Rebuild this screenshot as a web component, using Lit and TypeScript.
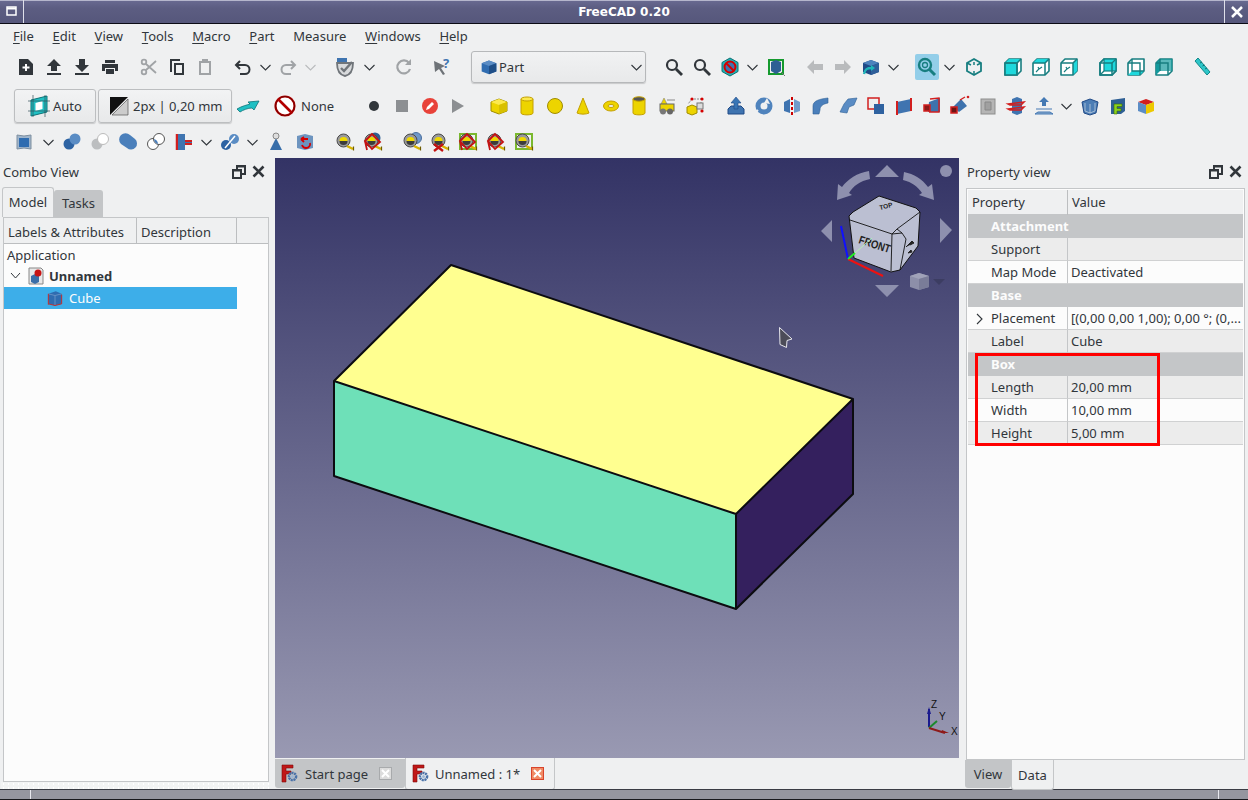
import { LitElement, html, css, svg } from "lit";
import { customElement } from "lit/decorators.js";

const D = "#31363b", G = "#a0a3a6", BL = "#3f74b0", BD = "#204a87", Y = "#edd400", YD = "#c4a000", T = "#1fb5b8", R = "#d40000";

const cube = (top: string, left: string, right: string, stroke = "none") => svg`
  <path d="M4 8l8-3 8 3v9l-8 3-8-3z" fill="${left}" stroke="${stroke}"/>
  <path d="M4 8l8-3 8 3-8 3z" fill="${top}"/><path d="M12 11l8-3v9l-8 3z" fill="${right}"/>`;
const wireBase = svg`<path d="M4 8l4-4h12v12l-4 4H4z" fill="#fff" stroke="#177e80" stroke-width="1.600" stroke-linejoin="round"/>`;
const wireEdges = svg`<path d="M4 8h12l4-4M16 8v12" fill="none" stroke="#177e80" stroke-width="1.500"/>`;
const meas = (mode: "" | "blue" | "double" | "x" | "diamond" = "", green = false) => svg`
  ${green ? svg`<path d="M4 4h16v15H4z" fill="none" stroke="#7ab82e" stroke-width="2"/>` : ""}
  ${mode === "blue" ? svg`<circle cx="14" cy="8" r="5.500" fill="#2e5f94"/>` : ""}
  ${mode === "double" ? svg`<circle cx="16" cy="8" r="5.500" fill="#6f97c8" stroke="#4a6f9e"/>` : ""}
  <circle cx="10.500" cy="10.500" r="6.500" fill="#9a9a9a" stroke="#4a4a4a"/>
  <path d="M6.500 11a4 4 0 0 1 8 0z" fill="#efd800"/><path d="M6.500 11a4 4 0 0 0 8 0z" fill="#3c3c3c"/>
  <path d="M14 16l6 3" stroke="#d8b400" stroke-width="2.400"/><path d="M20.500 16.500v4" stroke="#6e5c00" stroke-width="1.200"/>
  ${mode === "x" ? svg`<path d="M6 14l9 7M6 21l9-7" stroke="#c41212" stroke-width="2.300"/>` : ""}
  ${mode === "diamond" || mode === "blue" ? svg`<path d="M4 11l7-7 8 8-8 7zM4 11l2 9" fill="none" stroke="#c41212" stroke-width="1.800"/>` : ""}`;

const I: Record<string, unknown> = {
  new: svg`<path d="M5 4h9l5 5v11H5z" fill="${D}"/><path d="M12 9v7M8.500 12.500h7" stroke="#fff" stroke-width="2"/>`,
  up: svg`<path d="M12 4l7 7h-4v5H9v-5H5zM5 18h14v2H5z" fill="${D}"/>`,
  down: svg`<path d="M9 4h6v6h4l-7 7-7-7h4zM5 18h14v2H5z" fill="${D}"/>`,
  print: svg`<path d="M7 5h10v3H7zM4 9h16v7h-3v-3H7v3H4zM8 14h8v5H8z" fill="${D}"/>`,
  cut: svg`<g stroke="${G}" fill="none" stroke-width="1.800"><circle cx="7" cy="7" r="2.300"/><circle cx="7" cy="17" r="2.300"/><path d="M9 9l10 9M9 15L19 6"/></g>`,
  copy: svg`<path d="M5 4h10v2H7v11H5z" fill="${D}"/><path d="M9 8h10v12H9zm2 2v8h6v-8z" fill="${D}" fill-rule="evenodd"/>`,
  paste: svg`<path d="M6 6h3V4h6v2h3v14H6zm2 2v10h8V8z" fill="${G}" fill-rule="evenodd"/>`,
  undo: svg`<path d="M9 6L5 10l4 4M5 10h9a4.500 4.500 0 0 1 0 9h-5" fill="none" stroke="${D}" stroke-width="2"/>`,
  redo: svg`<path d="M15 6l4 4-4 4M19 10h-9a4.500 4.500 0 0 0 0 9h5" fill="none" stroke="${G}" stroke-width="2"/>`,
  sync: svg`<path d="M4 8c0 8 3 12 8 13 5-1 8-5 8-13z" fill="#d8dadc" stroke="#70757a" stroke-width="1.800"/><path d="M4 3h10v4H4z" fill="${BL}"/><path d="M8 13l3 3 8-9" fill="none" stroke="#70757a" stroke-width="2.400"/>`,
  refresh: svg`<path d="M18 14a6.500 6.500 0 1 1-1-6" fill="none" stroke="${G}" stroke-width="2.200"/><path d="M19 4v6h-6z" fill="${G}"/>`,
  what: svg`<path d="M4 6l11 5-4 2 4 6-2 1-4-6-4 3z" fill="#6e7378"/><text x="13" y="13" font-size="13" font-weight="700" fill="${BL}" font-family="Noto Sans">?</text>`,
  zoom: svg`<circle cx="10" cy="10" r="5" fill="none" stroke="${D}" stroke-width="2.200"/><path d="M14 14l6 6" stroke="${D}" stroke-width="2.800"/>`,
  nosel: svg`<path d="M12 3l8 4.500v9L12 21l-8-4.500v-9z" fill="#1fb5b8" stroke="#0d6f72"/><circle cx="12" cy="12" r="5.500" fill="${BL}" stroke="${R}" stroke-width="2"/><path d="M8 8l8 8" stroke="${R}" stroke-width="2"/>`,
  sel3d: svg`<rect x="5" y="5" width="14" height="14" fill="none" stroke="#159a2e" stroke-width="2"/><path d="M7 7l5-2 5 2v9l-5 3-5-3z" fill="#2e5f94"/><path d="M17 17l4 4" stroke="#777"/>`,
  back: svg`<path d="M4 12l7-7v4h9v6h-9v4z" fill="#b9bbbd"/>`,
  fwd: svg`<path d="M20 12l-7-7v4H4v6h9v4z" fill="#b9bbbd"/>`,
  cubearrow: svg`${cube("#4d82bd", BD, "#2f5f9a")}<path d="M5 19c1-5 3-6 8-6" fill="none" stroke="${T}" stroke-width="2.400"/><path d="M12 10l4 3-4 3z" fill="${T}"/>`,
  hl: svg`<circle cx="10" cy="10" r="6" fill="none" stroke="#177e80" stroke-width="2.400"/><circle cx="10" cy="10" r="2.500" fill="none" stroke="#177e80" stroke-width="1.300"/><path d="M14 14l6 6" stroke="#177e80" stroke-width="3"/>`,
  iso: svg`<path d="M12 4l7 4v8l-7 4-7-4V8z" fill="none" stroke="#177e80" stroke-width="1.800"/><path d="M5 8l4 2M19 8l-4 2M12 20v-4M12 7v3" stroke="#177e80" stroke-width="1.500"/>`,
  vfront: svg`${wireBase}<path d="M4 8l4-4h12l-4 4v12H4z" fill="#1ed8dc"/>${wireEdges}<path d="M4 8h12v12H4z" fill="none" stroke="#177e80" stroke-width="1.600"/>`,
  vtop: svg`${wireBase}<path d="M4 8l4-4h12l-4 4z" fill="#1ed8dc"/>${wireEdges}<path d="M7 17l3-3-1-2M13 12l-3 2" stroke="#177e80" stroke-width="1.200" fill="none"/>`,
  vright: svg`${wireBase}<path d="M16 8l4-4v12l-4 4z" fill="#1ed8dc"/>${wireEdges}<path d="M7 17l3-3-1-2M13 12l-3 2" stroke="#177e80" stroke-width="1.200" fill="none"/>`,
  vrear: svg`${wireBase}<rect x="8" y="4" width="12" height="12" fill="#1ed8dc" stroke="#177e80" stroke-width="1.200"/><path d="M4 8h12v12H4z" fill="none" stroke="#177e80" stroke-width="1.500"/><path d="M4 8l4-4M4 20l4-4M16 8l4-4M16 20l4-4" stroke="#177e80" stroke-width="1.300"/>`,
  vbottom: svg`${wireBase}<path d="M4 20l4-4h12l-4 4z" fill="#1ed8dc"/><path d="M8 4v12h12M4 8h12v12" fill="none" stroke="#177e80" stroke-width="1.400"/>`,
  vleft: svg`${wireBase}<path d="M4 8l4-4v12l-4 4z" fill="#149a9d"/><rect x="8" y="4" width="12" height="12" fill="#149a9d" opacity=".7"/><path d="M8 4v12M4 8h12v12" fill="none" stroke="#177e80" stroke-width="1.500"/>`,
  ruler: svg`<path d="M8 3l12 14-3 3L5 6z" fill="#2dc6c9" stroke="#12888a"/><path d="M10 8l2-1M12.500 11l2-1M15 14l2-1" stroke="#0f6e70"/>`,
  arrow: svg`<path d="M1 15c5-3 10-4 13-5l-2-2 11-1-5 9-2-2c-4 0-9 2-12 4z" fill="#1fc0c4" stroke="#0d7478" stroke-width=".8"/>`,
  circ: svg`<circle cx="12" cy="12" r="5" fill="${D}"/>`,
  sq: svg`<rect x="6" y="6" width="12" height="12" fill="#8c8f92"/>`,
  pen: svg`<circle cx="12" cy="12" r="8" fill="#e8423a"/><path d="M8 16l1-3 5-5 2 2-5 5z" fill="#fff"/>`,
  play: svg`<path d="M6 5l12 7-12 7z" fill="#8c8f92"/>`,
  ybox: cube("#fce94f", Y, "#d8c000", "#a08c00"),
  ycyl: svg`<path d="M6 5v14c0 2.500 12 2.500 12 0V5z" fill="${Y}" stroke="${YD}"/><ellipse cx="12" cy="5" rx="6" ry="2" fill="#fce94f" stroke="${YD}"/>`,
  ysph: svg`<circle cx="12" cy="12" r="7.500" fill="${Y}" stroke="#a08c00"/>`,
  ycone: svg`<path d="M12 4l6 15c-3 1.500-9 1.500-12 0z" fill="${Y}" stroke="${YD}"/>`,
  ytor: svg`<ellipse cx="12" cy="12" rx="7.500" ry="5" fill="${Y}" stroke="${YD}"/><ellipse cx="12" cy="12" rx="3" ry="1.500" fill="#eff0f1" stroke="${YD}"/>`,
  ytube: svg`<path d="M6 5v14c0 2.500 12 2.500 12 0V5z" fill="${Y}" stroke="${YD}"/><ellipse cx="12" cy="5" rx="6" ry="2.200" fill="#555" stroke="${YD}"/>`,
  prims: svg`<path d="M9 4l3 6H6z" fill="${Y}" stroke="#777" stroke-width=".5"/><path d="M12 6h8" stroke="#888"/><rect x="5" y="10" width="14" height="7" fill="${Y}" stroke="#666"/><circle cx="8" cy="17.500" r="3" fill="#777"/><circle cx="15" cy="17.500" r="3" fill="#666"/>`,
  shape: svg`<path d="M4 13l5-2 5 2v6l-5 2-5-2z" fill="${Y}" stroke="#a08c00"/><path d="M11 5h7M18 8v6M9 5L5 10" stroke="#888" stroke-dasharray="2 1"/><rect x="14" y="9" width="6" height="6" fill="#ddd" stroke="#777"/><circle cx="9" cy="5" r="1.600" fill="${R}"/><circle cx="19" cy="5" r="1.600" fill="${R}"/><circle cx="19" cy="17" r="1.600" fill="${R}"/>`,
  extrude: svg`<path d="M4 15l3-3h10l3 3v5H4z" fill="${BL}" stroke="${BD}"/><path d="M12 3l5 6h-3v6h-4V9H7z" fill="#3975b5" stroke="${BD}" stroke-width=".6"/>`,
  revolve: svg`<circle cx="12" cy="12" r="6" fill="none" stroke="#4f83bd" stroke-width="5"/><path d="M15 4l3 6-6-1z" fill="#eff0f1"/><path d="M6 16l-2 2" stroke="#eff0f1" stroke-width="2"/>`,
  mirror: svg`<path d="M4 8l6-3v14l-6-2z" fill="${BL}"/><path d="M20 8l-6-3v14l6-2z" fill="#6f9bca"/><path d="M12 3v18" stroke="#c00" stroke-width="2" stroke-dasharray="3 2"/>`,
  fillet: svg`<path d="M5 20V12C5 7 11 5 20 4v5c-5 1-8 3-8 7l-1 4z" fill="#4a7fbb" stroke="#2d5f96" stroke-width=".6"/>`,
  chamfer: svg`<path d="M4 18l4-8 4-5 9-1-3 7-5 2-2 6z" fill="#5a8cc4" stroke="#2d5f96" stroke-width=".6"/>`,
  offsetS: svg`<rect x="4" y="4" width="11" height="11" fill="none" stroke="#d21f1f" stroke-width="1.500"/><rect x="10" y="10" width="10" height="10" fill="#2f62a0"/>`,
  ruled: svg`<path d="M5 8l14-3v12L5 20z" fill="${BL}"/><path d="M5 7v14M19 4v13" stroke="#d21f1f" stroke-width="2"/>`,
  loft: svg`<path d="M9 8l11-4v14H8z" fill="#3d72ad"/><path d="M10 5l9-1v14H9" fill="none" stroke="#d21f1f" stroke-width="1.400"/><rect x="4" y="11" width="6" height="6" fill="#8b1a1a" stroke="#d21f1f" stroke-width="1.500"/>`,
  sweep: svg`<path d="M5 13l8-8 6 7-8 6z" fill="#3d72ad"/><rect x="3" y="13" width="6" height="6" fill="#6b1515" stroke="#d21f1f" stroke-width="1.500"/><path d="M12 6l5-3" stroke="#d21f1f" stroke-width="1.400"/><circle cx="20" cy="3" r="1.300" fill="#d21f1f"/>`,
  section: svg`<rect x="5" y="5" width="14" height="15" fill="#b5b5b5" stroke="#8d8d8d"/><path d="M9 8h6v8H9z" fill="#a0a0a0" stroke="#888"/>`,
  slices: svg`<path d="M8 5l5-2 5 2v14l-5 2-5-2z" fill="${BL}"/><path d="M4 10l16-2-3 3H6zM4 15l16-2-3 3H6z" fill="none" stroke="#d21f1f" stroke-width="1.500"/>`,
  offset3: svg`<path d="M12 3l5 5h-3v4h-4V8H7z" fill="#4479b4"/><path d="M4 15h16M3 20l3-2h12l3 2z" fill="#88aacd" stroke="#4479b4"/>`,
  thick: svg`<path d="M4 8l8-3 8 3-2 11-6 2-6-2z" fill="#4c7db5" stroke="#204a87"/><path d="M7 9v8l5 2 5-2V9M12 10v9" fill="none" stroke="#bcd" stroke-width=".8"/>`,
  partF: svg`<path d="M5 6l14-2v13l-4 3H5z" fill="#2e5f94"/><path d="M8 10h8v2.500h-5v2h4v2.500h-4v3H8z" fill="#8bd11e" stroke="#3d6d00" stroke-width=".6"/>`,
  colorcube: svg`<path d="M4 8l8-3 8 3-8 3z" fill="#d21f1f"/><path d="M4 8l8 3v9l-8-3z" fill="#5b8dc6"/><path d="M12 11l8-3v9l-8 3z" fill="#edc900"/>`,
  bcube: cube("#5a8cc4", "#2f6cb0", "#1e4e87"),
  boxfade: svg`<path d="M5 5l7 1 7-1v14l-7-1-7 1z" fill="#9fb5cc" stroke="#7f8f9f"/><path d="M7 8h10v9H7z" fill="#2f6cb0"/>`,
  bunion: svg`<circle cx="9" cy="14" r="5.500" fill="#2d63a3"/><circle cx="15" cy="9" r="5.500" fill="#5a8cc4"/>`,
  gunion: svg`<circle cx="9" cy="14" r="5.500" fill="#bcbec0"/><circle cx="15" cy="9" r="5.500" fill="#fff" stroke="#bbb"/>`,
  bfuse: svg`<path d="M5 14a6 6 0 0 1 9-9l5 4a6 6 0 0 1-8 9z" fill="#4a7fbb"/>`,
  bint: svg`<circle cx="9" cy="14" r="5.500" fill="#fff" stroke="#555"/><circle cx="15" cy="9" r="5.500" fill="#fff" stroke="#555"/><path d="M10 9a5.500 5.500 0 0 1 4 5 5.500 5.500 0 0 1-4-5z" fill="#4a7fbb"/>`,
  join: svg`<path d="M5 4v16" stroke="#d21f1f" stroke-width="2.500"/><path d="M6 4h7v7h7v2h-7v7H6z" fill="${BL}"/><path d="M13 11h7M13 14h7" stroke="#d21f1f" stroke-width="2"/>`,
  split: svg`<circle cx="8" cy="15" r="5" fill="#2d63a3"/><circle cx="16" cy="9" r="5" fill="#5a8cc4"/><path d="M7 18L17 6" stroke="#fff" stroke-width="1.500"/>`,
  tip: svg`<path d="M12 8l6 12H6z" fill="#376eaa"/><circle cx="12" cy="6" r="3" fill="#ddd" stroke="#888"/>`,
  restore: svg`<path d="M4 6l8-2 8 2v12l-8 2-8-2z" fill="#6d94bf"/><path d="M17 13a4 4 0 0 1-4 5c-3 0-4-3-4-3M8 9h7M8 9l3-2M8 9l3 3" fill="none" stroke="#d40000" stroke-width="1.800"/>`,
  m1: meas(), m2: meas("blue"), m3: meas("double"), m4: meas("x"),
  m5: meas("diamond", true), m6: meas("diamond"), m7: meas("", true),
};

const row1: (string | number)[] = ["new","up","down","print",11,"cut","copy","paste",10,"undo","v","redo","vg",12,"sync",2,"v",12,"refresh",10,"what",15,"COMBO",14,"zoom","zoom","nosel","v",1,"sel3d",11,"back","fwd","cubearrow","v",11,"hl",0,"v",2,"iso",11,"vfront","vtop","vright",11,"vrear","vbottom","vleft",10,"ruler"];
const row2a: (string | number)[] = [26,"circ","sq","pen","play",13,"ybox","ycyl","ysph","ycone","ytor","ytube","prims","shape",13,"extrude","revolve","mirror","fillet","chamfer","offsetS","ruled","loft","sweep","section","slices","offset3","v",1,"thick","partF","colorcube"];
const row3: (string | number)[] = ["boxfade",2,"v",1,"bunion","gunion","bfuse","bint","join","v",1,"split","v",1,"tip",1,"restore",12,"m1","m2",11,"m3","m4","m5","m6","m7"];

const chev = (c: string) => html`<svg class="chev" width="17" height="24" viewBox="0 0 17 24"><path d="M3.500 10l5 5 5-5" fill="none" stroke="${c}" stroke-width="1.100"/></svg>`;

const FLogo = html`<svg width="18" height="19" viewBox="0 0 18 19"><path d="M1 1h11v3H5v3h5v3H5v8H1z" fill="#c01818" stroke="#7d0c0c" stroke-width=".6"/><circle cx="11.500" cy="12.500" r="3.600" fill="none" stroke="#4a72a8" stroke-width="2.500" stroke-dasharray="2 .6"/><circle cx="11.500" cy="12.500" r="1.500" fill="#9db6d4"/></svg>`;
const winBtns = html`<svg class="wb" width="34" height="18" viewBox="0 0 34 18"><path d="M1 6h10v10H1zM3 8.500h6V14H3z" fill="#31363b" fill-rule="evenodd"/><path d="M5 6V2h10v10h-4v-2h2V4.500H7V6z" fill="#31363b"/><path d="M22.500 3.500l10 10M32.500 3.500l-10 10" stroke="#31363b" stroke-width="2.600"/></svg>`;

@customElement("app-root")
export class AppRoot extends LitElement {
  static styles = css`
    :host { display: block; width: 1248px; height: 800px; overflow: hidden; background: #eff0f1; color: #31363b; font-family: "Noto Sans", sans-serif; font-size: 13px; }
    .win { display: flex; flex-direction: column; height: 800px; }
    .title { height: 23px; flex: none; display: flex; align-items: center; border-bottom: 1px solid #0b0b14; background: linear-gradient(#6a6b92, #5c5d82 35%, #56577b); box-shadow: inset 0 1px 0 #b5b6cc; color: #fff; font: 700 12px "DejaVu Sans", sans-serif; }
    .wbtn { width: 23px; height: 23px; flex: none; display: flex; align-items: center; justify-content: center; border-right: 1px solid #dfe0ea; }
    .wbtn.r { border-right: 0; border-left: 1px solid #dfe0ea; }
    .tt { flex: 1; text-align: center; }
    .menu { height: 24px; flex: none; display: flex; align-items: center; padding-left: 13px; }
    .menu span { margin-right: 18.75px; }
    .menu u { text-underline-offset: 2px; }
    .tb { display: flex; align-items: center; flex: none; }
    .t1 { height: 38px; padding-left: 12px; }
    .t2 { height: 39px; padding-left: 14px; }
    .t3 { height: 33px; padding-left: 10px; }
    .slot { width: 28px; height: 24px; display: flex; align-items: center; justify-content: center; flex: none; }
    .slot.hl svg { background: #93cee9; border-radius: 2px; width: 24px; height: 26px; }
    .slot svg { display: block; overflow: visible; }
    .chev { flex: none; }
    .combo { width: 175px; height: 32px; flex: none; box-sizing: border-box; border: 1px solid #b6b8ba; border-radius: 3px; background: linear-gradient(#f1f2f3, #e8e9ea); box-shadow: 0 1px 1px #c8c9ca; display: flex; align-items: center; padding-left: 6px; }
    .combo .lb { flex: 1; margin-left: -1px; }
    .btn { height: 34px; box-sizing: border-box; border: 1px solid #bcbec0; border-radius: 3px; background: linear-gradient(#f2f3f4, #e8e9ea); box-shadow: 0 1px 1px #c8c9ca; display: flex; align-items: center; flex: none; }
    .b1 { width: 82px; padding-left: 12px; gap: 2px; margin-right: 2px; }
    .b2 { width: 134px; padding-left: 10px; gap: 4px; margin-right: 2px; }
    .none { margin-left: 2px; }
    .main { flex: 1; display: flex; min-height: 0; }
    .left { width: 269px; flex: none; display: flex; flex-direction: column; }
    .phead { height: 27px; padding: 0 0 2px 3px; flex: none; display: flex; align-items: center; justify-content: space-between; }
    .wb { margin-right: 4px; }
    .tabs { display: flex; height: 30px; flex: none; align-items: flex-end; padding-left: 2px; }
    .tabs > div { padding-bottom: 2px; box-sizing: border-box; }
    .tabs .on { width: 52px; height: 30px; background: #eff0f1; border: 1px solid #c4c6c8; border-bottom: 0; border-radius: 3px 3px 0 0; display: flex; align-items: center; justify-content: center; }
    .tabs .off { width: 49px; height: 27px; background: #c3c5c7; border-radius: 3px 3px 0 0; display: flex; align-items: center; justify-content: center; }
    .tree { flex: 1; margin-left: 3px; border: 1px solid #c4c6c8; background: #fcfcfc; min-height: 0; }
    .grip { height: 7px; flex: none; margin-left: 1px; background-color: #f3f4f4; background-image: radial-gradient(#fff 1px, transparent 1px); background-size: 5px 4px; }
    .thead { display: flex; background: #eff0f1; border-bottom: 1px solid #bcbec0; height: 26px; box-sizing: border-box; }
    .thead div { display: flex; align-items: center; padding: 2px 0 0 4px; border-right: 1px solid #bcbec0; box-sizing: border-box; }
    .th1 { width: 133px; } .th2 { width: 100px; }
    .tr { height: 21px; display: flex; align-items: center; }
    .app { padding-left: 3px; }
    .doc { padding-left: 6px; font-weight: 700; gap: 1px; }
    .doc .nm { margin-left: 4px; }
    .cube { height: 22px; width: 233px; background: #3daee9; color: #fcfcfc; padding-left: 41px; box-sizing: border-box; gap: 1px; margin-top: 1px; }
    .center { width: 684px; flex: none; margin-left: 6px; display: flex; flex-direction: column; }
    .view { height: 600px; flex: none; background: linear-gradient(#333365, #9999b2); }
    .view svg { display: block; }
    .dtabs { flex: 1; display: flex; align-items: flex-start; }
    .dt { display: flex; align-items: center; box-sizing: border-box; }
    .dt1 { width: 130px; height: 29px; margin-top: 1px; background: #c3c5c7; border-radius: 0 0 3px 3px; padding-left: 6px; }
    .dt2 { width: 150px; height: 32px; background: #eff0f1; border: 1px solid #c4c6c8; border-top: 0; border-radius: 0 0 3px 3px; padding-left: 6px; }
    .dt1 .lb { margin-left: 6px; flex: 1; }
    .dt2 .lb { margin-left: 5px; flex: 1; }
    .x { width: 13px; height: 13px; display: flex; align-items: center; justify-content: center; flex: none; box-sizing: border-box; }
    .x1 { background: #dcdcdc; border: 1px solid #a8aaac; margin-right: 13px; }
    .x2 { background: #f08a64; border: 1px solid #d9432b; margin-right: 10px; }
    .right { width: 283px; flex: none; display: flex; flex-direction: column; margin-left: 6px; position: relative; }
    .right .phead { padding: 0 0 2px 2px; height: 30px; box-sizing: border-box; }
    .right .wb { margin-right: 6px; }
    .props { height: 572px; flex: none; margin: 0 3px 0 1px; border: 1px solid #c4c6c8; background: #fcfcfc; padding: 1px; box-sizing: border-box; }
    .prow { display: grid; grid-template-columns: 100px 1fr; height: 23px; box-sizing: border-box; align-items: center; }
    .prow > div { height: 23px; display: flex; align-items: center; box-sizing: border-box; }
    .phdr { height: 25px; background: #eff0f1; border-bottom: 1px solid #c4c6c8; }
    .phdr > div { height: 25px; padding: 0 0 2px 4px; }
    .phdr > div:first-child { border-right: 1px solid #bcbec0; }
    .grp { background: #c4c6c8; color: #fcfcfc; font-weight: 700; padding: 0 0 2px 23px; box-sizing: border-box; height: 23px; display: flex; align-items: center; }
    .k { padding-left: 23px; position: relative; border-right: 1px solid #c4c6c8; }
    .k, .v { border-bottom: 1px solid #d0d1d2; }
    .v { padding-left: 3px; white-space: nowrap; overflow: hidden; }
    .odd .k, .odd .v { background: #ececec; }
    .odd { background: #eff0f1; }
    .exp { position: absolute; left: 8px; top: 6px; }
    .mark { position: absolute; left: 10px; top: 195px; width: 185px; height: 93px; box-sizing: border-box; border: 3px solid #f00; pointer-events: none; }
    .ptabs { display: flex; }
    .ptabs .a { width: 46px; height: 28px; background: #c3c5c7; border-radius: 0 0 3px 3px; display: flex; align-items: center; justify-content: center; box-sizing: border-box; padding-bottom: 1px; }
    .ptabs .b { width: 43px; height: 30px; background: #eff0f1; border: 1px solid #c4c6c8; border-top: 0; border-radius: 0 0 3px 3px; display: flex; align-items: center; justify-content: center; box-sizing: border-box; padding-top: 1px; }
    .status { height: 9px; flex: none; background: #95969f; border-top: 1px solid #3a3c44; border-bottom: 1px solid #17181c; display: flex; justify-content: space-between; }
    .status i { display: block; width: 1px; background: #e8e8ee; }
    .status .l { margin-left: 30px; }
    .status .r { margin-right: 29px; }
  `;

  private tb(items: (string | number)[]) {
    return items.map((it) => {
      if (typeof it === "number") return html`<span style="width:${it}px;flex:none"></span>`;
      if (it === "v") return chev("#31363b");
      if (it === "vg") return chev("#b9bbbd");
      if (it === "COMBO") return html`<div class="combo"><svg width="22" height="22" viewBox="0 0 24 24">${I.bcube}</svg><span class="lb">Part</span>${chev("#31363b")}</div>`;
      return html`<span class="slot ${it === "hl" ? "hl" : ""}"><svg width="24" height="24" viewBox="0 0 24 24">${I[it]}</svg></span>`;
    });
  }

  private prow(k: string, v: string, odd: boolean, exp = false) {
    return html`<div class="prow ${odd ? "odd" : ""}"><div class="k">${exp ? html`<svg class="exp" width="8" height="12" viewBox="0 0 8 12"><path d="M1 1l5 5-5 5" fill="none" stroke="#31363b" stroke-width="1.100"/></svg>` : ""}${k}</div><div class="v">${v}</div></div>`;
  }

  render() {
    return html`<div class="win">
      <div class="title">
        <div class="wbtn"><svg width="12" height="12" viewBox="0 0 12 12"><path d="M1 1h9v8H1z" fill="none" stroke="#fff" stroke-width="1.500"/><path d="M1 2.500h9" stroke="#fff" stroke-width="2"/></svg></div>
        <div class="tt">FreeCAD 0.20</div>
        <div class="wbtn r"><svg width="14" height="14" viewBox="0 0 14 14"><path d="M2 2l10 10M12 2L2 12" stroke="#fff" stroke-width="2.500"/></svg></div>
      </div>
      <div class="menu">
        <span><u>F</u>ile</span><span><u>E</u>dit</span><span><u>V</u>iew</span><span><u>T</u>ools</span><span><u>M</u>acro</span><span><u>P</u>art</span><span>Measure</span><span><u>W</u>indows</span><span><u>H</u>elp</span>
      </div>
      <div class="tb t1">${this.tb(row1)}</div>
      <div class="tb t2">
        <div class="btn b1"><svg width="24" height="24" viewBox="0 0 24 24"><path d="M4 6l16-4v16L4 22z" fill="#1fc0c4" stroke="#0d7478"/><path d="M8.500 9l7-2v8l-7 2z" fill="#fff"/><path d="M1 7h22M1 17h22M6 1v22M18 1v22" stroke="#31505a" stroke-width=".7"/></svg>Auto</div>
        <div class="btn b2"><svg width="20" height="20" viewBox="0 0 20 20"><path d="M1 1h18L1 19z" fill="#111"/><path d="M19 3v16H3z" fill="#ccc" stroke="#555" stroke-width=".7"/></svg>2px | 0,20 mm</div>
        <span class="slot"><svg width="24" height="24" viewBox="0 0 24 24">${I.arrow}</svg></span>
        <span style="width:9px;flex:none"></span>
        <span class="slot"><svg width="24" height="24" viewBox="0 0 24 24"><circle cx="12" cy="12" r="9.500" fill="#fff" stroke="#b30000" stroke-width="2.200"/><circle cx="12" cy="12" r="9.500" fill="none" stroke="#300" stroke-width=".5"/><path d="M5 5l14 14" stroke="#b30000" stroke-width="2.600"/></svg></span>
        <span class="none">None</span>
        ${this.tb(row2a)}
      </div>
      <div class="tb t3">${this.tb(row3)}</div>
      <div class="main">
        <div class="left">
          <div class="phead"><span>Combo View</span>${winBtns}</div>
          <div class="tabs"><div class="on">Model</div><div class="off">Tasks</div></div>
          <div class="tree">
            <div class="thead"><div class="th1">Labels &amp; Attributes</div><div class="th2">Description</div></div>
            <div class="tr app">Application</div>
            <div class="tr doc"><svg width="11" height="12" viewBox="0 0 11 12"><path d="M1 3l4.500 5L10 3" fill="none" stroke="#31363b" stroke-width="1"/></svg>
              <svg style="margin-left:6px" width="16" height="18" viewBox="0 0 16 18"><path d="M1 1h12l2 2v14H1z" fill="#e8e8e8" stroke="#888"/><path d="M3 9l4-2 4 2v6l-4 2-4-2z" fill="#3a6ea8"/><circle cx="10" cy="6" r="3.500" fill="#c81414"/></svg>
              <span class="nm">Unnamed</span></div>
            <div class="tr cube"><svg width="20" height="20" viewBox="0 0 24 24"><path d="M4 7l9-3 7 3v12l-8 2-8-2z" fill="#2f6cb0"/><path d="M4 7l8 2 8-2M12 9v12" stroke="#6f97c8" fill="none"/><path d="M4 7v13M12 21l-8-2M20 8v11M12 21l8-2" stroke="#c03030" stroke-width="1.200" fill="none"/></svg><span style="margin-left:3px">Cube</span></div>
          </div>
          <div class="grip"></div>
        </div>
        <div class="center">
          <div class="view"><svg width="684" height="600" viewBox="275 158 684 600">
            <path d="M451 265L853 399 736 514 334 381z" fill="#ffff90"/>
            <path d="M334 381L736 514V609L334 476z" fill="#6ee0b8"/>
            <path d="M853 399V494L736 609V514z" fill="#34205e"/>
            <path d="M451 265L853 399V494L736 609 334 476V381zM334 381L736 514 853 399M736 514V609" fill="none" stroke="#0c0c10" stroke-width="2" stroke-linejoin="round"/>
            <path d="M779.500 327.500L792 339l-5 1.500-.5 7-6.500-3z" fill="#4c4c58" stroke="#e8e8ee" stroke-width="1"/>
            <g fill="#8e90ae">
              <path d="M887 165l12 12h-24zM875 285h24l-12 12zM832 220v22l-11-11zM940 218v25l12-13z"/>
              <circle cx="946" cy="171" r="6"/>
              <path d="M869 171l1 8c-10 2-17 7-21 14l3 2-15 5 1-16 4 3c6-8 15-14 27-16zM904 172l-1 8c9 2 15 7 19 13l-3 2 15 5-2-16-4 3c-6-8-14-13-24-15z"/>
            </g>
            <path d="M849 216l4-4 26-16 37 12 4 4-2 34-18 24-9 2-37-14z" fill="#bbbfd2" stroke="#111" stroke-width="1"/>
            <path d="M850 220l42 14 5-5 23-17M892 234l-1 37M892 234l10-1 4 6-6 31M897 229l5 4" fill="none" stroke="#111" stroke-width=".9"/>
            <text font-family="Liberation Sans" font-size="9.500" font-weight="700" fill="#222" transform="translate(858 243) rotate(18) scale(1 1.200)">FRONT</text>
            <text font-family="Liberation Sans" font-size="6.500" font-weight="700" fill="#222" transform="translate(880 210) rotate(-14)">TOP</text>
            <path d="M906 247l6-6 2 2-4 2M908 253l3-3 1 2z" stroke="#222" fill="#222" stroke-width="1"/>
            <path d="M841 226l7 33" stroke="#1010ff" stroke-width="2"/><path d="M848 259l35 17" stroke="#ee1111" stroke-width="2"/>
            <path d="M848 259l7-6" stroke="#22ee22" stroke-width="2"/><path d="M855 253l17-15" stroke="#b7efb7" stroke-width="1"/>
            <path d="M910 276l9-3 10 3v11l-10 3-9-3z" fill="#8d8fa9"/><path d="M910 276l9 3 10-3-10-3z" fill="#a0a2b8"/><path d="M919 279l10-3v11l-10 3z" fill="#7a7c98"/><path d="M933 279h12l-6 6z" fill="#3c3d62"/>
            <path d="M929 727v-18" stroke="#1a1a8e" stroke-width="2"/><path d="M927 714h4l-2-7z" fill="#1a1a8e"/>
            <path d="M929 728l8-7" stroke="#1c8a2c" stroke-width="2"/>
            <path d="M929 728l16 5" stroke="#8e1a1a" stroke-width="2"/><path d="M941 733h8l-7-3z" fill="#8e1a1a"/>
            <g font-family="Liberation Sans" font-size="10" fill="#111"><text x="931" y="708">Z</text><text x="939" y="720">Y</text><text x="951" y="735">X</text></g>
          </svg></div>
          <div class="dtabs">
            <div class="dt dt1">${FLogo}<span class="lb">Start page</span><span class="x x1"><svg width="9" height="9" viewBox="0 0 9 9"><path d="M1 1l7 7M8 1L1 8" stroke="#fff" stroke-width="2"/></svg></span></div>
            <div class="dt dt2">${FLogo}<span class="lb">Unnamed : 1*</span><span class="x x2"><svg width="9" height="9" viewBox="0 0 9 9"><path d="M1 1l7 7M8 1L1 8" stroke="#fff" stroke-width="2"/></svg></span></div>
          </div>
        </div>
        <div class="right">
          <div class="phead"><span>Property view</span>${winBtns}</div>
          <div class="props">
            <div class="prow phdr"><div>Property</div><div>Value</div></div>
            <div class="grp">Attachment</div>
            ${this.prow("Support", "", true)}
            ${this.prow("Map Mode", "Deactivated", false)}
            <div class="grp">Base</div>
            ${this.prow("Placement", "[(0,00 0,00 1,00); 0,00 °; (0,...", false, true)}
            ${this.prow("Label", "Cube", true)}
            <div class="grp">Box</div>
            ${this.prow("Length", "20,00 mm", true)}
            ${this.prow("Width", "10,00 mm", false)}
            ${this.prow("Height", "5,00 mm", true)}
          </div>
          <div class="mark"></div>
          <div class="ptabs"><div class="a">View</div><div class="b">Data</div></div>
        </div>
      </div>
      <div class="status"><i class="l"></i><i class="r"></i></div>
    </div>`;
  }
}
